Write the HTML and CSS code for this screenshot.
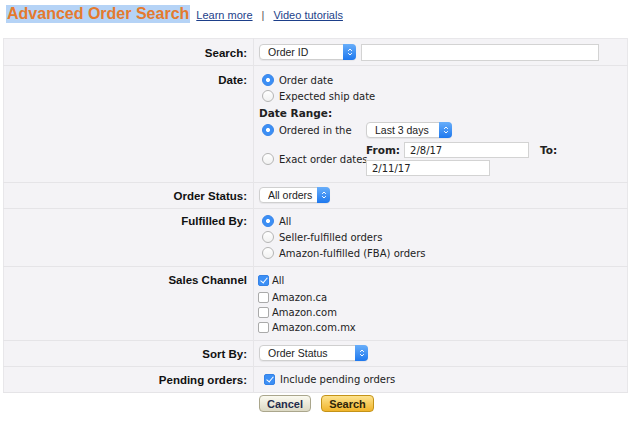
FILE: index.html
```html
<!DOCTYPE html>
<html lang="en">
<head>
    <meta charset="UTF-8">
    <meta name="viewport" content="width=device-width, initial-scale=1.0">
    <title>Advanced Order Search</title>
    <link rel="stylesheet" href="styles.css">
</head>
<body>
    <div class="header">
        <h1 class="title">Advanced Order Search</h1>
        <a href="#" class="link">Learn more</a>
        <span class="sep">|</span>
        <a href="#" class="link">Video tutorials</a>
    </div>

    <table class="search-form">
        <tr class="row-search">
            <th>Search:</th>
            <td>
                <div class="line">
                    <span class="select w-id">
                        <select><option>Order ID</option></select>
                        <span class="arrow"><svg viewBox="0 0 8 12" width="6" height="10"><path d="M1.5 4.5 L4 2 L6.5 4.5 M1.5 7.5 L4 10 L6.5 7.5" fill="none" stroke="#fff" stroke-width="1.3"/></svg></span>
                    </span>
                    <input type="text" class="text w-search">
                </div>
            </td>
        </tr>
        <tr class="row-date">
            <th>Date:</th>
            <td>
                <label class="line"><input type="radio" name="date" checked> Order date</label>
                <label class="line"><input type="radio" name="date"> Expected ship date</label>
                <div class="line range-title"><b>Date Range:</b></div>
                <div class="range">
                    <label class="range-opt"><input type="radio" name="range" checked> Ordered in the</label>
                    <div class="range-val">
                        <span class="select w-days">
                            <select><option>Last 3 days</option></select>
                            <span class="arrow"><svg viewBox="0 0 8 12" width="6" height="10"><path d="M1.5 4.5 L4 2 L6.5 4.5 M1.5 7.5 L4 10 L6.5 7.5" fill="none" stroke="#fff" stroke-width="1.3"/></svg></span>
                        </span>
                    </div>
                    <label class="range-opt"><input type="radio" name="range"> Exact order dates</label>
                    <div class="range-val dates">
                        <div class="from-row">
                            <b>From:</b>
                            <input type="text" class="text w-date" value="2/8/17">
                            <b class="to">To:</b>
                        </div>
                        <input type="text" class="text w-date2" value="2/11/17">
                    </div>
                </div>
            </td>
        </tr>
        <tr class="row-small">
            <th>Order Status:</th>
            <td>
                <span class="select w-status">
                    <select><option>All orders</option></select>
                    <span class="arrow"><svg viewBox="0 0 8 12" width="6" height="10"><path d="M1.5 4.5 L4 2 L6.5 4.5 M1.5 7.5 L4 10 L6.5 7.5" fill="none" stroke="#fff" stroke-width="1.3"/></svg></span>
                </span>
            </td>
        </tr>
        <tr class="row-fulfilled">
            <th>Fulfilled By:</th>
            <td>
                <label class="line"><input type="radio" name="ful" checked> All</label>
                <label class="line"><input type="radio" name="ful"> Seller-fulfilled orders</label>
                <label class="line"><input type="radio" name="ful"> Amazon-fulfilled (FBA) orders</label>
            </td>
        </tr>
        <tr class="row-channel">
            <th>Sales Channel</th>
            <td>
                <label class="line check first"><input type="checkbox" checked>All</label>
                <label class="line check"><input type="checkbox">Amazon.ca</label>
                <label class="line check"><input type="checkbox">Amazon.com</label>
                <label class="line check"><input type="checkbox">Amazon.com.mx</label>
            </td>
        </tr>
        <tr class="row-small">
            <th>Sort By:</th>
            <td>
                <span class="select w-sort">
                    <select><option>Order Status</option></select>
                    <span class="arrow"><svg viewBox="0 0 8 12" width="6" height="10"><path d="M1.5 4.5 L4 2 L6.5 4.5 M1.5 7.5 L4 10 L6.5 7.5" fill="none" stroke="#fff" stroke-width="1.3"/></svg></span>
                </span>
            </td>
        </tr>
        <tr class="row-pending">
            <th>Pending orders:</th>
            <td>
                <label class="line pending"><input type="checkbox" checked> Include pending orders</label>
            </td>
        </tr>
    </table>

    <div class="buttons">
        <button class="btn cancel">Cancel</button>
        <button class="btn search">Search</button>
    </div>
</body>
</html>
```

FILE: styles.css
```css
body {
    margin: 0;
    background: #fff;
    font-family: "DejaVu Sans", sans-serif;
    font-size: 10px;
    color: #222;
}

.header {
    height: 33px;
    padding: 5px 0 0 6px;
    box-sizing: content-box;
    display: flex;
    align-items: baseline;
    gap: 6px;
    font-family: "Liberation Sans", Arial, sans-serif;
}

.title {
    margin: 0;
    font-size: 16px;
    line-height: 18px;
    font-weight: bold;
    color: #e47a2e;
    background: #b5d3f6;
    padding: 0 1px;
}

.link {
    font-size: 11px;
    color: #1d3f8a;
}

.sep {
    font-size: 11px;
    color: #555;
    margin: 0 3px;
}

.search-form {
    margin-left: 3px;
    width: 625px;
    border-collapse: collapse;
    background: #f4f3f6;
    border: 1px solid #e8e7ea;
}

.search-form tr {
    border-bottom: 1px solid #e5e4e7;
}

.search-form th {
    width: 243px;
    padding: 6px 6px 0 0;
    text-align: right;
    vertical-align: top;
    font-family: "Liberation Sans", Arial, sans-serif;
    font-size: 11.5px;
    line-height: 16px;
    font-weight: bold;
    color: #111;
    border-right: 1px solid #e6e5e8;
}

.search-form td {
    padding: 6px 5px 6px 5px;
    vertical-align: top;
}

.row-search th { padding-top: 6px; }
.row-search td { padding: 5px 5px 5px 5px; }

.row-small th { padding-top: 5px; }
.row-small td { padding: 4px 5px 5px 5px; }

.row-pending th { padding-top: 5px; }
.row-pending td { padding: 4px 5px 4px 5px; }

.row-fulfilled th { padding-top: 4px; }
.row-fulfilled td { padding: 4px 5px 5px 5px; }

.row-channel th { padding-top: 5px; }
.row-channel td { padding: 5px 5px 5px 2px; }

.line {
    display: flex;
    align-items: center;
    gap: 5px;
    height: 16px;
}

.line b {
    font-size: 10.5px;
}

.range-title {
    height: 17px;
}

.check {
    height: 15px;
    gap: 3px;
}

.check.first {
    height: 16px;
    margin-bottom: 2px;
}

.pending {
    gap: 5px;
    padding-left: 3px;
    height: 17px;
}

input[type="radio"] {
    appearance: none;
    margin: 0 0 0 3px;
    width: 12px;
    height: 12px;
    border-radius: 50%;
    border: 1px solid #b4b4b4;
    background: linear-gradient(#fff, #f1f1f1);
    box-sizing: border-box;
    flex-shrink: 0;
}

input[type="radio"]:checked {
    border-color: #3a86ea;
    background: radial-gradient(circle, #fff 0 1.6px, #3c8ff5 2.4px);
}

input[type="checkbox"] {
    appearance: none;
    margin: 0 0 0 2px;
    width: 11px;
    height: 11px;
    border-radius: 2px;
    border: 1px solid #aaa;
    background: #fff;
    box-sizing: border-box;
    position: relative;
    flex-shrink: 0;
}

input[type="checkbox"]:checked {
    border-color: #3582e6;
    background: #3c8ff5;
}

input[type="checkbox"]:checked::after {
    content: "";
    position: absolute;
    left: 3px;
    top: 0px;
    width: 3px;
    height: 6px;
    border: solid #fff;
    border-width: 0 1.5px 1.5px 0;
    transform: rotate(40deg);
}

.select {
    position: relative;
    display: inline-block;
    height: 16px;
}

.select select {
    appearance: none;
    width: 100%;
    height: 16px;
    margin: 0;
    padding: 0 16px 0 8px;
    border: 1px solid #cfcfcf;
    border-radius: 4px;
    background: #fff;
    font-family: "Liberation Sans", Arial, sans-serif;
    font-size: 10.5px;
    line-height: 14px;
    color: #222;
    box-shadow: 0 1px 1px rgba(0, 0, 0, 0.06);
}

.select .arrow {
    position: absolute;
    right: 0;
    top: 0;
    width: 13px;
    height: 16px;
    border-radius: 0 4px 4px 0;
    background: linear-gradient(#68aefa, #1e78ee);
    display: flex;
    align-items: center;
    justify-content: center;
}

.w-id { width: 97px; }
.w-days { width: 86px; }
.w-status { width: 71px; }
.w-sort { width: 109px; }

.text {
    height: 17px;
    margin: 0;
    padding: 0 5px;
    border: 1px solid #d3d3d3;
    background: #fff;
    box-sizing: border-box;
    font-family: "DejaVu Sans", sans-serif;
    font-size: 10px;
    color: #222;
}

.w-search { width: 238px; }
.w-date { width: 125px; height: 16px; }
.w-date2 { width: 124px; height: 16px; margin-top: 2px; }

.range {
    display: grid;
    grid-template-columns: 107px auto;
    align-items: center;
    row-gap: 3px;
}

.range-opt {
    display: flex;
    align-items: center;
    gap: 5px;
    height: 18px;
    white-space: nowrap;
}

.range-val {
    display: flex;
    align-items: center;
}

.dates {
    flex-direction: column;
    align-items: flex-start;
}

.from-row {
    display: flex;
    align-items: center;
    gap: 4px;
}

.from-row b {
    font-size: 10.5px;
}

.from-row .to {
    margin-left: 7px;
}

.buttons {
    display: flex;
    gap: 10px;
    padding: 2px 0 0 259px;
}

.btn {
    height: 17px;
    padding: 0 6px;
    border-radius: 4px;
    font-family: "Liberation Sans", Arial, sans-serif;
    font-size: 11px;
    font-weight: bold;
    cursor: pointer;
}

.cancel {
    width: 52px;
    border: 1px solid #aaa68c;
    background: linear-gradient(#fbfaf0, #dcd9c4);
    color: #1f2c4c;
}

.search {
    width: 53px;
    border: 1px solid #c49318;
    background: linear-gradient(#fde38e, #f0b42a);
    color: #2e2408;
}
```
